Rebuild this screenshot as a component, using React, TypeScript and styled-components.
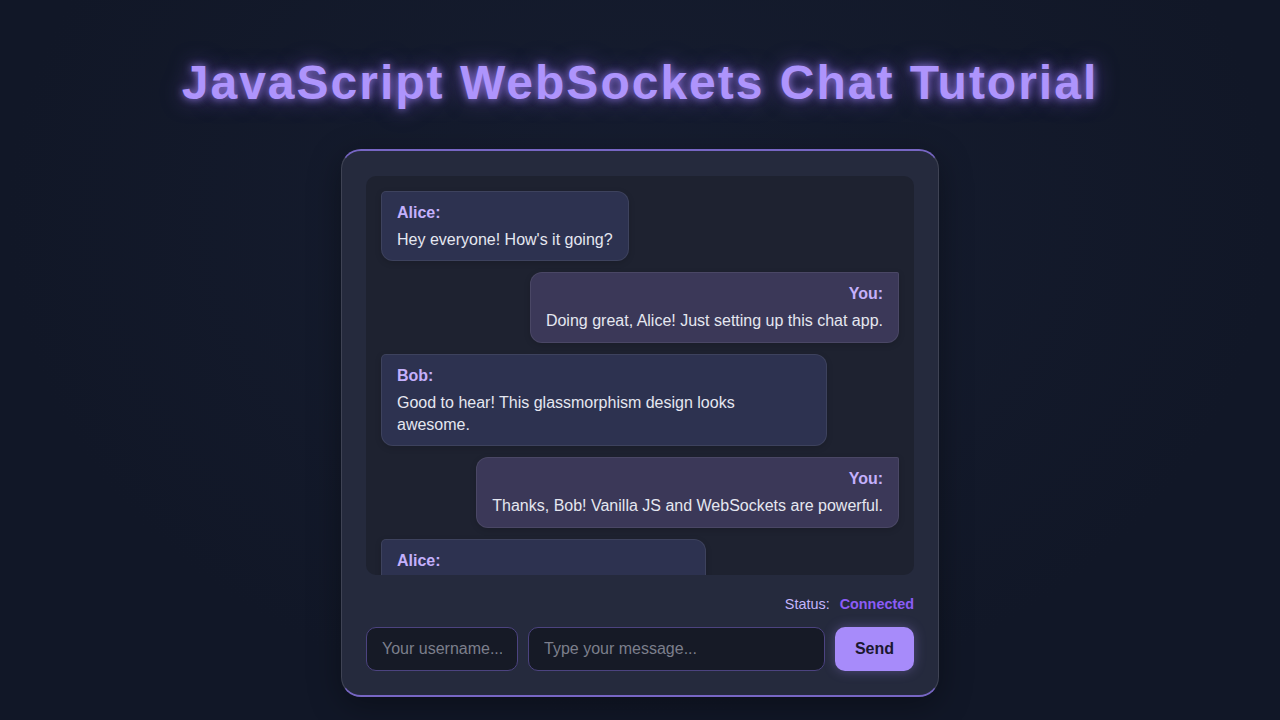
import styled, { createGlobalStyle } from 'styled-components';

const GlobalStyle = createGlobalStyle`
  html, body {
    margin: 0;
    padding: 0;
    background: #121828;
    font-family: "Liberation Sans", Arial, sans-serif;
    color: #e2e8f0;
  }
  * { box-sizing: border-box; }
`;

const Page = styled.div`
  min-height: 720px;
  display: flex;
  flex-direction: column;
  align-items: center;
  padding-top: 54px;
  background: radial-gradient(ellipse at 50% 30%, #161d30 0%, #111727 70%);
`;

const Title = styled.h1`
  margin: 0 0 37px;
  font-size: 48px;
  line-height: 58px;
  font-weight: 700;
  letter-spacing: 2px;
  color: #ae94fc;
  text-shadow: 0 0 8px rgba(167, 139, 250, 0.85), 0 0 22px rgba(139, 92, 246, 0.6);
`;

const Card = styled.div`
  width: 598px;
  padding: 25px 24px 24px;
  border-radius: 20px;
  background: #252a3d;
  border: 1px solid rgba(255, 255, 255, 0.12);
  border-top: 2px solid #7766c4;
  border-bottom: 2px solid #7766c4;
  box-shadow: 0 8px 32px rgba(0, 0, 0, 0.35);
`;

const Messages = styled.div`
  height: 399px;
  overflow: hidden;
  padding: 15px;
  border-radius: 10px;
  background: #1e2230;
  display: flex;
  flex-direction: column;
  gap: 11px;
`;

const Bubble = styled.div<{ $own?: boolean }>`
  box-sizing: content-box;
  max-width: 80%;
  flex-shrink: 0;
  padding: 10px 15px 9px;
  border-radius: 12px;
  border: 1px solid rgba(255, 255, 255, 0.08);
  font-size: 16px;
  line-height: 22.4px;
  align-self: ${(p) => (p.$own ? 'flex-end' : 'flex-start')};
  text-align: ${(p) => (p.$own ? 'right' : 'left')};
  background: ${(p) => (p.$own ? '#3b3858' : '#2d3250')};
  ${(p) => (p.$own ? 'border-top-right-radius: 2px;' : 'border-top-left-radius: 5px;')}
  box-shadow: 0 2px 6px rgba(0, 0, 0, 0.15);
`;

const Sender = styled.div`
  font-weight: 700;
  color: #c4b0fc;
  margin-bottom: 4.5px;
`;

const Text = styled.div`
  color: #e5e7f0;
`;

const StatusRow = styled.div`
  display: flex;
  justify-content: flex-end;
  gap: 10px;
  margin: 19px 0 13px;
  font-size: 14.4px;
  line-height: 20px;
  color: #c4b5fd;
`;

const StatusValue = styled.span`
  font-weight: 700;
  color: #8b5cf6;
`;

const InputRow = styled.div`
  display: flex;
  gap: 10px;
`;

const Input = styled.input<{ $grow?: boolean }>`
  height: 44px;
  padding: 0 15px;
  border-radius: 10px;
  border: 1px solid #4c4380;
  background: #161a26;
  color: #e2e8f0;
  font-family: "Liberation Sans", Arial, sans-serif;
  font-size: 16px;
  outline: none;
  ${(p) => (p.$grow ? 'flex: 1; min-width: 0;' : 'width: 152px; flex: none;')}
  &::placeholder { color: #7c7f8c; }
`;

const SendButton = styled.button`
  height: 44px;
  width: 79px;
  border: none;
  border-radius: 10px;
  background: #a78bfa;
  color: #1b1830;
  font-family: "Liberation Sans", Arial, sans-serif;
  font-size: 16px;
  font-weight: 700;
  box-shadow: 0 0 12px rgba(167, 139, 250, 0.35);
`;

const messages = [
  { from: 'Alice', text: "Hey everyone! How's it going?" },
  { from: 'You', text: 'Doing great, Alice! Just setting up this chat app.', own: true },
  { from: 'Bob', text: 'Good to hear! This glassmorphism design looks awesome.' },
  { from: 'You', text: 'Thanks, Bob! Vanilla JS and WebSockets are powerful.', own: true },
  { from: 'Alice', text: "Can't wait to try it out with everyone here!" },
];

const App = () => (
  <>
    <GlobalStyle />
    <Page>
      <Title>JavaScript WebSockets Chat Tutorial</Title>
      <Card>
        <Messages>
          {messages.map((m, i) => (
            <Bubble key={i} $own={m.own}>
              <Sender>{m.from}:</Sender>
              <Text>{m.text}</Text>
            </Bubble>
          ))}
        </Messages>
        <StatusRow>
          <span>Status:</span>
          <StatusValue>Connected</StatusValue>
        </StatusRow>
        <InputRow>
          <Input placeholder="Your username..." />
          <Input $grow placeholder="Type your message..." />
          <SendButton>Send</SendButton>
        </InputRow>
      </Card>
    </Page>
  </>
);

export default App;
